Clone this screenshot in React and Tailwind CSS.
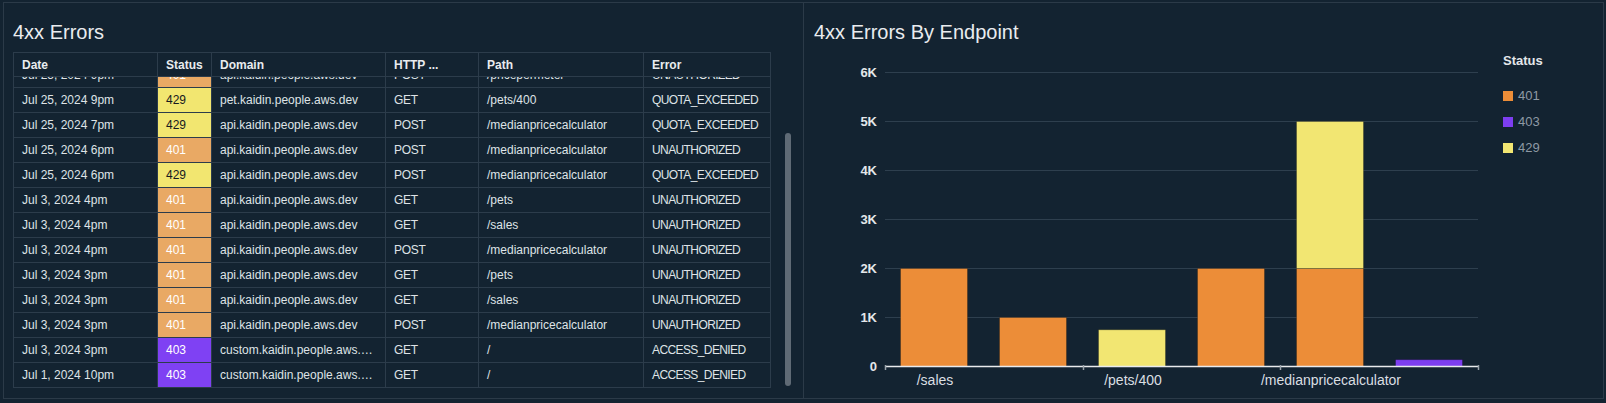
import React from 'react'

const API = 'api.kaidin.people.aws.dev'
const CUSTOM = 'custom.kaidin.people.aws.dev'

// first row is the one cut off by the scroll position
const filas = [
  ['Jul 25, 2024 9pm', '401', API, 'POST', '/pricepermeter', 'UNAUTHORIZED'],
  ['Jul 25, 2024 9pm', '429', 'pet.kaidin.people.aws.dev', 'GET', '/pets/400', 'QUOTA_EXCEEDED'],
  ['Jul 25, 2024 7pm', '429', API, 'POST', '/medianpricecalculator', 'QUOTA_EXCEEDED'],
  ['Jul 25, 2024 6pm', '401', API, 'POST', '/medianpricecalculator', 'UNAUTHORIZED'],
  ['Jul 25, 2024 6pm', '429', API, 'POST', '/medianpricecalculator', 'QUOTA_EXCEEDED'],
  ['Jul 3, 2024 4pm', '401', API, 'GET', '/pets', 'UNAUTHORIZED'],
  ['Jul 3, 2024 4pm', '401', API, 'GET', '/sales', 'UNAUTHORIZED'],
  ['Jul 3, 2024 4pm', '401', API, 'POST', '/medianpricecalculator', 'UNAUTHORIZED'],
  ['Jul 3, 2024 3pm', '401', API, 'GET', '/pets', 'UNAUTHORIZED'],
  ['Jul 3, 2024 3pm', '401', API, 'GET', '/sales', 'UNAUTHORIZED'],
  ['Jul 3, 2024 3pm', '401', API, 'POST', '/medianpricecalculator', 'UNAUTHORIZED'],
  ['Jul 3, 2024 3pm', '403', CUSTOM, 'GET', '/', 'ACCESS_DENIED'],
  ['Jul 1, 2024 10pm', '403', CUSTOM, 'GET', '/', 'ACCESS_DENIED'],
]

const statusCelda = {
  '401': 'bg-[#e9a964] text-white',
  '403': 'bg-[#7f41f3] text-white',
  '429': 'bg-[#f2e670] text-[#16191f]',
}

const cols = 'grid grid-cols-[144px_54px_174px_93px_165px_127px]'
const celda = 'border-r border-[#2c3c4b] px-[8px] truncate'

function Tabla() {
  return (
    <div className="w-[758px] border-l border-t border-[#2c3c4b] text-[12px]">
      <div className={`${cols} h-[24px] items-stretch border-b border-[#2c3c4b] font-bold text-[#e9ecef]`}>
        {['Date', 'Status', 'Domain', 'HTTP ...', 'Path', 'Error'].map(h => (
          <div key={h} className={`${celda} flex items-center`}>{h}</div>
        ))}
      </div>
      <div className="h-[311px] overflow-hidden">
        <div className="-mt-[14px]">
          {filas.map((f, i) => (
            <div key={i} className={`${cols} h-[25px] border-b border-[#2c3c4b] text-[#dfe3e7]`}>
              <div className={`${celda} leading-[24px]`}>{f[0]}</div>
              <div className={`${celda} leading-[24px] ${statusCelda[f[1]]}`}>{f[1]}</div>
              <div className={`${celda} leading-[24px]`}>{f[2]}</div>
              <div className={`${celda} leading-[24px] tracking-[-0.3px]`}>{f[3]}</div>
              <div className={`${celda} leading-[24px]`}>{f[4]}</div>
              <div className={`${celda} leading-[24px] tracking-[-0.6px]`}>{f[5]}</div>
            </div>
          ))}
        </div>
      </div>
    </div>
  )
}

const NARANJA = '#ec8d38'
const MORADO = '#7d3ef0'
const AMARILLO = '#f2e672'

// y for a value: 49px per 1K, baseline at 316
const yv = v => 316 - v * 0.049

const barras = [
  [[2000, NARANJA]],
  [[1000, NARANJA]],
  [[750, AMARILLO]],
  [[2000, NARANJA]],
  [[2000, NARANJA], [3000, AMARILLO]],
  [[140, MORADO]],
]

function Grafica() {
  const ticks = [0, 1000, 2000, 3000, 4000, 5000, 6000]
  return (
    <svg width="690" height="345" className="block">
      {ticks.slice(1).map(t => (
        <line key={t} x1="81" x2="674" y1={yv(t) + 0.5} y2={yv(t) + 0.5} stroke="#2e3f4e" strokeWidth="1" />
      ))}
      {ticks.map(t => (
        <text key={t} x="73" y={yv(t) + 0.5} textAnchor="end" dominantBaseline="central"
          fontSize="13" fontWeight="700" fill="#e4e7ea">
          {t === 0 ? '0' : `${t / 1000}K`}
        </text>
      ))}
      {barras.map((segs, i) => {
        let base = 0
        return segs.map(([v, c], j) => {
          const y1 = yv(base + v)
          const y0 = yv(base)
          base += v
          return (
            <rect key={`${i}-${j}`} x={96.5 + i * 99} y={y1 + 0.5} width="67" height={y0 - y1}
              fill={c} stroke="rgba(0,0,0,0.25)" strokeWidth="1" />
          )
        })
      })}
      <line x1="81" x2="674" y1="316.5" y2="316.5" stroke="#e9ebed" strokeWidth="1.5" />
      {[81, 279, 476, 674].map(x => (
        <line key={x} x1={x + 0.5} x2={x + 0.5} y1="315" y2="320" stroke="#9aa3ab" strokeWidth="1.5" />
      ))}
      {[['/sales', 131], ['/pets/400', 329], ['/medianpricecalculator', 527]].map(([l, x]) => (
        <text key={l} x={x} y="330" textAnchor="middle" dominantBaseline="central"
          fontSize="14" fill="#dadfe3">
          {l}
        </text>
      ))}
    </svg>
  )
}

export default function App() {
  return (
    <div className="w-[1606px] h-[403px] bg-[#132331] pt-[2px] pl-[3px] flex font-['Liberation_Sans',Arial,sans-serif]">
      {/* Tabla de errores */}
      <div className="w-[800px] h-[397px] border-l border-t border-b border-[#2b3a48] pl-[9px]">
        <h2 className="mt-[17px] text-[20px] leading-[24px] text-[#e9ecef]">4xx Errors</h2>
        <div className="mt-[8px] flex">
          <Tabla />
          <div className="ml-[14px] w-[6px] pt-[81px]">
            <div className="h-[253px] rounded-full bg-[#5f6a75]" />
          </div>
        </div>
      </div>

      {/* Grafica por endpoint */}
      <div className="w-[801px] h-[397px] border border-[#2b3a48] flex">
        <div className="flex flex-col">
          <h2 className="mt-[17px] pl-[10px] text-[20px] leading-[24px] text-[#e9ecef]">4xx Errors By Endpoint</h2>
          <div className="mt-[6px]">
            <Grafica />
          </div>
        </div>
        <div className="ml-[9px] pt-[50px] flex flex-col">
          <div className="h-[16px] text-[13px] leading-[16px] font-bold text-[#e4e7ea]">Status</div>
          <div className="mt-[19px] flex flex-col gap-[10px]">
            {[['401', 'bg-[#ec8d38]'], ['403', 'bg-[#7d3ef0]'], ['429', 'bg-[#f2e672]']].map(([s, c]) => (
              <div key={s} className="h-[16px] flex items-center gap-[5px] text-[13px] leading-[16px] text-[#8e99a5]">
                <span className={`w-[10px] h-[10px] ${c}`} />
                {s}
              </div>
            ))}
          </div>
        </div>
      </div>
    </div>
  )
}
